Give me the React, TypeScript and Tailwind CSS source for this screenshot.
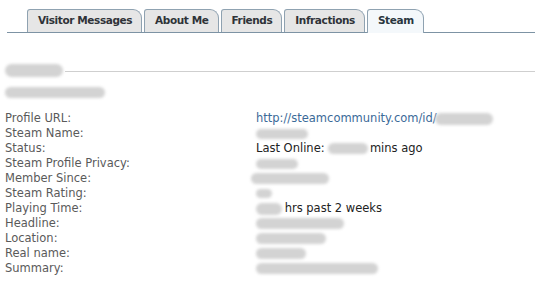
import React from 'react';

const tabs = ['Visitor Messages', 'About Me', 'Friends', 'Infractions', 'Steam'];

// smudged-out private data from the screenshot
function Smudge({ w, h = 11, className = '' }: { w: number; h?: number; className?: string }) {
  return (
    <span
      className={`inline-block align-middle rounded-full bg-[#d3d3d3] blur-[1.5px] ${className}`}
      style={{ width: w, height: h }}
    />
  );
}

type Row = { label: string; value: React.ReactNode };

const rows: Row[] = [
  {
    label: 'Profile URL:',
    value: (
      <span className="text-[#3b6a98]">
        http://steamcommunity.com/id/<Smudge w={58} h={12} className="-ml-[2px]" />
      </span>
    ),
  },
  { label: 'Steam Name:', value: <Smudge w={52} h={10} /> },
  {
    label: 'Status:',
    value: (
      <span className="text-[#222]">
        Last Online: <Smudge w={40} h={11} className="-mr-[2px]" /> mins ago
      </span>
    ),
  },
  { label: 'Steam Profile Privacy:', value: <Smudge w={42} h={10} /> },
  { label: 'Member Since:', value: <Smudge w={78} h={11} className="-ml-[5px]" /> },
  { label: 'Steam Rating:', value: <Smudge w={16} h={9} /> },
  {
    label: 'Playing Time:',
    value: (
      <span className="text-[#222]">
        <Smudge w={26} h={12} className="-mr-[1px]" /> hrs past 2 weeks
      </span>
    ),
  },
  { label: 'Headline:', value: <Smudge w={88} h={11} /> },
  { label: 'Location:', value: <Smudge w={70} h={11} /> },
  { label: 'Real name:', value: <Smudge w={50} h={11} /> },
  { label: 'Summary:', value: <Smudge w={122} h={11} /> },
];

export default function App() {
  return (
    <div className="w-[535px] h-[282px] bg-white overflow-hidden font-['DejaVu_Sans',Tahoma,sans-serif]">
      <div className="pt-[9px] ml-[7px] border-b border-[#7d93a4] flex items-end">
        <div className="ml-[20px] flex items-end gap-[2px]">
          {tabs.map((t) => {
            const active = t === 'Steam';
            return (
              <div
                key={t}
                className={`h-[23px] pl-[10px] pr-[9px] flex items-center text-[10.5px] font-bold tracking-[-0.4px] border border-b-0 border-[#8fa2b1] rounded-tl-[3px] rounded-tr-[9px] ${
                  active
                    ? 'bg-[#f4f8fb] text-[#2a3640] -mb-px h-[24px] pb-px'
                    : 'bg-[#e6e6e6] text-[#2f3338]'
                }`}
              >
                {t}
              </div>
            );
          })}
        </div>
      </div>

      <div className="pt-[30px] pl-[5px]">
        <div className="flex items-center h-[14px]">
          <Smudge w={58} h={13} />
          <div className="flex-1 h-px bg-[#cfcfcf] ml-[2px] mt-[2px]" />
        </div>
        <div className="mt-[9px] h-[12px] flex items-center">
          <Smudge w={100} h={11} />
        </div>

        <div className="mt-[13px] grid grid-cols-[251px_1fr] text-[11.5px] leading-[15px]">
          {rows.map((r) => (
            <React.Fragment key={r.label}>
              <div className="text-[#5a5a5a]">{r.label}</div>
              <div className="flex items-center h-[15px]">{r.value}</div>
            </React.Fragment>
          ))}
        </div>
      </div>
    </div>
  );
}
